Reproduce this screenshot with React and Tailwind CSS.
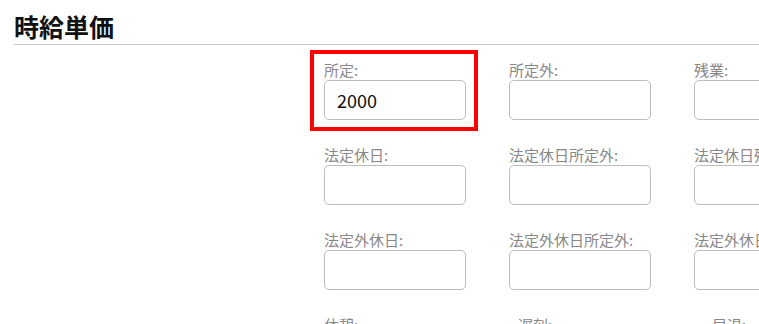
const ROWS = [
    ['所定', '所定外', '残業'],
    ['法定休日', '法定休日所定外', '法定休日残業'],
    ['法定外休日', '法定外休日所定外', '法定外休日残業'],
];

// last row: labels only, the page is cut off below them
const LAST_ROW = [
    { label: '休憩', offset: 'ml-0' },
    { label: '遅刻', offset: 'ml-[9px]' },
    { label: '早退', offset: 'ml-[18px]' },
];

function Field({ label, value, highlight }) {
    return (
        <div className="relative w-[142px]">
            {highlight && (
                <div className="absolute left-[-14px] top-[-10px] w-[168px] h-[81px] border-4 border-[#ff0000] pointer-events-none"></div>
            )}
            <div className="h-5 leading-5 text-[15px] text-[#888] whitespace-nowrap">{label}:</div>
            <input
                readOnly
                value={value || ''}
                className="block w-[142px] h-10 px-3 rounded-[5px] border border-[#bdbdbd] bg-white text-[18px] text-[#111] outline-none"
            />
        </div>
    );
}

export default function App() {
    return (
        <div
            className="w-[759px] h-[324px] overflow-hidden bg-white"
            style={{ fontFamily: '"Noto Sans CJK JP", "Noto Sans", sans-serif' }}
        >
            {/* Section header */}
            <div className="ml-[14px] pt-[10px] pb-[2px] border-b border-[#cccccc]">
                <h2 className="h-8 leading-8 text-[25px] font-bold text-[#111]">時給単価</h2>
            </div>

            {/* Rate fields */}
            <div className="pl-[324px] pt-[15px] flex flex-col gap-[25px] w-[1100px]">
                {ROWS.map((row, r) => (
                    <div key={r} className="flex gap-[43px]">
                        {row.map((label, i) => (
                            <Field
                                key={label}
                                label={label}
                                value={r === 0 && i === 0 ? '2000' : ''}
                                highlight={r === 0 && i === 0}
                            />
                        ))}
                    </div>
                ))}
                <div className="flex gap-[43px]">
                    {LAST_ROW.map((f) => (
                        <div key={f.label} className="w-[142px]">
                            <div className={`h-5 leading-5 text-[15px] text-[#888] ${f.offset}`}>{f.label}:</div>
                        </div>
                    ))}
                </div>
            </div>
        </div>
    );
}
